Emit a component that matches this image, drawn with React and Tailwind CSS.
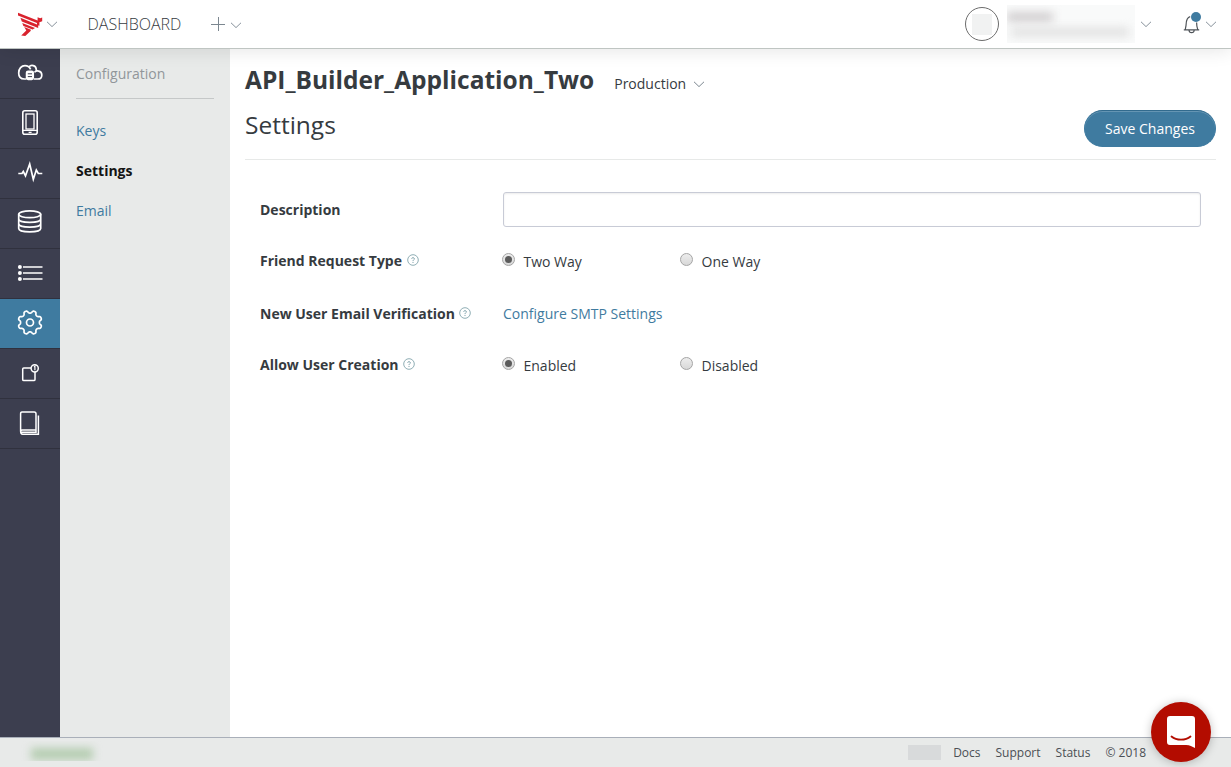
import React from "react";

function Chevron({ className = "" }) {
  return (
    <svg className={`block shrink-0 ${className}`} width="12" height="7" viewBox="0 0 12 7" fill="none" stroke="currentColor" strokeWidth="1">
      <path d="M1 .8 6 5.6 11 .8" />
    </svg>
  );
}

function Help() {
  return (
    <svg className="ml-[4.5px] block shrink-0 text-[#83a5ad]" width="12" height="12" viewBox="0 0 12 12" fill="none" stroke="currentColor">
      <circle cx="6" cy="6" r="5.3" strokeWidth=".9" />
      <path d="M4.6 4.7C4.7 3.3 7.4 3.3 7.4 4.8 7.4 5.9 6 5.8 6 7.1M6 8v1" strokeWidth="1" />
    </svg>
  );
}

function Logo() {
  return (
    <svg className="block shrink-0 text-[#d9232e]" width="26" height="25" viewBox="0 0 26 25" fill="currentColor">
      <path d="M1 .8 20.6 8.6 20.6 5.2 23.2 6.3 25.2 5.4V9.2L22.4 10.2V13.8L20 12.9V11L1 3.5Z" />
      <path d="M3.4 5.8 21.2 13V15.9L4.8 9.4Z" />
      <path d="M5.2 11 18 16.1 15.6 17.6 6.4 13.9Z" />
      <path d="M7.2 15 13.9 17.8 13.6 19 8.3 24 4.2 23.6 9.3 18.4Z" />
    </svg>
  );
}

const gearPoints = Array.from({ length: 160 }, (_, i) => {
  const a = (i / 160) * Math.PI * 2;
  const r = 10.7 - 1.35 * Math.tanh(1.8 * Math.cos(8 * a));
  return `${(14 + r * Math.sin(a)).toFixed(2)},${(14 - r * Math.cos(a)).toFixed(2)}`;
}).join(" ");

const icons = {
  cloud: (
    <>
      <path d="M10.3 20H8.2C4 20 2.7 16.7 2.7 14 2.7 9.5 5.5 6.7 9 6.7c2.3 0 4.5 1.4 5.6 3.6M13 7.9c1.9-2.5 7-1.9 7.3 2.5v1.8M18.5 13.4c1.4-2.4 7.3-2 7.3 2.5 0 2.8-2 4.1-4 4.1h-4" />
      <rect x="10.6" y="12.3" width="6.6" height="8" rx="1.5" fill="currentColor" />
      <path d="M11.8 14.8h4.2M11.8 17.6h4.2" stroke="#3c3e4f" strokeWidth="1" />
    </>
  ),
  phone: (
    <g transform="translate(0 -1)">
      <rect x="6.8" y="2.8" width="14.4" height="23.4" rx="2" strokeWidth="1.6" />
      <rect x="10" y="6" width="8" height="15" strokeWidth="1.3" />
      <path d="M7 22.4h14M12.6 24.4h3" strokeWidth="1.4" />
    </g>
  ),
  pulse: <path d="M2.3 14.5H6l1.3-2 2.2 4.3L13.7 5l3.6 15.3 3-9.3 2 3.5h4" strokeWidth="1.7" />,
  database: (
    <g transform="translate(0 -1)">
      <ellipse cx="13.7" cy="6.3" rx="11" ry="3.4" />
      <path d="M2.7 6.3v14.2c0 4.5 22 4.5 22 0V6.3M2.7 11c0 4.5 22 4.5 22 0M2.7 15.7c0 4.5 22 4.5 22 0" />
    </g>
  ),
  list: (
    <>
      <path d="M7 8h19.5M7 14h19.5M7 20h19.5" strokeWidth="1.7" />
      <g fill="currentColor" stroke="none">
        <circle cx="3.9" cy="8" r="2" />
        <circle cx="3.9" cy="14" r="2" />
        <circle cx="3.9" cy="20" r="2" />
      </g>
    </>
  ),
  gear: (
    <>
      <circle cx="14" cy="13.5" r="3.5" />
      <polygon points={gearPoints} strokeLinejoin="round" transform="translate(0 -.5)" />
    </>
  ),
  notice: (
    <>
      <path d="M15 9H7.8C7 9 6.7 9.3 6.7 10v10.5c0 .8.4 1.1 1.1 1.1h10c.9 0 1.2-.4 1.2-1.1v-7.8" strokeWidth="1.5" />
      <circle cx="18.7" cy="9.3" r="3.6" strokeWidth="1.5" />
      <path d="m18 8 .9-.7v4" strokeWidth="1.2" />
    </>
  ),
  book: (
    <path d="M6 3h12.2c1.2 0 1.8.7 1.8 1.8V21H6.3C4.9 21 4.6 22 4.6 22.6V5C4.6 3.7 5 3 6 3ZM4.6 22c0 2 .7 3.2 2 3.2h15.8V6.5M5.5 23.2H20V21" strokeWidth="1.5" />
  ),
};

const nav = ["cloud", "phone", "pulse", "database", "list", "gear", "notice", "book"];

function NavItem({ name }) {
  const active = name === "gear";
  return (
    <a className={`flex h-[50px] shrink-0 items-start justify-center border-b border-[#30313e] pt-[10px] text-white ${active ? "bg-[#3f7ba0]" : ""}`}>
      <svg width="28" height="28" viewBox="0 0 28 28" fill="none" stroke="currentColor" strokeWidth="1.7">
        {icons[name]}
      </svg>
    </a>
  );
}

function Radio({ label, checked }) {
  return (
    <label className="flex w-[178px] items-start">
      <span className="mt-[3px] mr-[0.5px] -ml-px flex h-[13px] w-[13px] items-center justify-center rounded-full border border-[#a5a5a5] bg-linear-to-b from-[#ededed] to-[#d8d8d8]">
        {checked && <span className="h-[7px] w-[7px] rounded-full bg-[#5b5b5b]" />}
      </span>
      <span className="mt-[2px] ml-2 leading-5">{label}</span>
    </label>
  );
}

function Row({ label, help, className, children }) {
  return (
    <div className={`flex items-start pl-[15px] ${className}`}>
      <div className="flex h-5 w-[243px] shrink-0 items-center font-bold">
        <span>{label}</span>
        {help && <Help />}
      </div>
      {children}
    </div>
  );
}

export default function App() {
  return (
    <div className="flex h-[767px] w-[1231px] flex-col overflow-hidden bg-white font-['Open_Sans',sans-serif] text-[14px] text-[#363b3f]">
      <header className="relative z-10 flex h-[49px] shrink-0 items-center border-b border-[#bfc5c2] bg-white shadow-[0_0_20px_rgba(0,0,0,0.12)]">
        <div className="flex items-center pl-[17px]">
          <Logo />
          <Chevron className="ml-[3px] text-[#87919b]" />
          <span className="ml-[29.5px] text-[16px] font-light text-[#363b3f]">DASHBOARD</span>
          <svg className="ml-[29.5px] block text-[#7c8790]" width="14" height="14" viewBox="0 0 14 14" stroke="currentColor">
            <path d="M0 7.5h14M7.5 0v14" />
          </svg>
          <Chevron className="mt-[2px] ml-[5px] text-[#87919b]" />
        </div>
        <div className="ml-auto flex items-center pr-[14px]">
          <div className="flex h-[34px] w-[34px] items-center justify-center rounded-full border border-[#6d6d6d]">
            <span className="h-[21px] w-[20px] bg-[#f1f2f2]" />
          </div>
          <div className="ml-[8px] flex h-[38px] w-[128px] flex-col justify-center overflow-hidden bg-[#f9fafa]">
            <span className="h-[8px] w-[46px] bg-[#c9c5c7] blur-[5px]" />
            <span className="mt-[7px] ml-1 h-[8px] w-[118px] bg-[#dedede] blur-[5px]" />
          </div>
          <Chevron className="ml-[5px] text-[#87919b]" />
          <div className="relative -mt-[2px] ml-[31px] h-[22px] w-[18px]">
            <svg className="block" width="18" height="22" viewBox="0 0 18 22" fill="none" stroke="#4e5358" strokeWidth="1.2">
              <path d="M.8 17.9h15.4M2.4 17.9C2.2 16 3 15.3 3.1 12.5 3.2 8.6 4 5.5 7.2 4.6M13.6 10.5c.1 5 .7 5.3 1.3 7.4M6 18.2c.2 3.3 5 3.3 5.2 0" />
            </svg>
            <span className="absolute top-0 left-[8px] h-[10px] w-[10px] rounded-full bg-[#3f7ba0]" />
          </div>
          <Chevron className="ml-[4px] text-[#87919b]" />
        </div>
      </header>

      <div className="flex min-h-0 grow">
        <nav className="flex w-[60px] shrink-0 flex-col bg-[#3c3e4f]">
          {nav.map((name) => (
            <NavItem key={name} name={name} />
          ))}
        </nav>
        <aside className="w-[170px] shrink-0 bg-[#e8eae9] px-4 pt-[15px]">
          <div className="border-b border-[#c5c8c8] pb-[14px] leading-5 text-[#91969a]">Configuration</div>
          <div className="mt-[22px] flex flex-col gap-5 leading-5 text-[#3f7ba0]">
            <a>Keys</a>
            <a className="font-bold text-[#141414]">Settings</a>
            <a>Email</a>
          </div>
        </aside>
        <main className="grow px-[15px]">
          <div className="flex items-start pt-[13px]">
            <h1 className="text-[24.5px] leading-9 font-bold">API_Builder_Application_Two</h1>
            <div className="mt-3 ml-5 flex items-center leading-5">
              <span>Production</span>
              <Chevron className="ml-[7px] text-[#7c8790]" />
            </div>
          </div>
          <div className="flex h-[62px] items-start justify-between border-b border-[#e7e9e8]">
            <h2 className="mt-[9px] text-[24.5px] leading-9">Settings</h2>
            <button className="mt-[12px] h-[37px] w-[132px] rounded-full border border-t-[#326b8e] border-[#3f7ba0] bg-[#3f7ba0] text-white shadow-[inset_0_1px_0_rgba(255,255,255,0.2)]">
              Save Changes
            </button>
          </div>
          <Row label="Description" className="h-[59px] pt-[39px]">
            <input className="-mt-[7px] mr-[15px] h-[35px] grow rounded-[3px] border border-[#c8cbd6] bg-white shadow-[inset_0_1px_2px_rgba(0,0,0,0.08)]" />
          </Row>
          <Row label="Friend Request Type" help className="mt-[31px]">
            <Radio label="Two Way" checked />
            <Radio label="One Way" />
          </Row>
          <Row label="New User Email Verification" help className="mt-[31px]">
            <a className="mt-px leading-5 text-[#3f7ba0]">Configure SMTP Settings</a>
          </Row>
          <Row label="Allow User Creation" help className="mt-[30px]">
            <Radio label="Enabled" checked />
            <Radio label="Disabled" />
          </Row>
        </main>
      </div>

      <footer className="relative flex h-[30px] shrink-0 items-center border-t border-[#a9afb9] bg-[#e8eae9] text-[12px] text-[#4b4f54]">
        <div className="ml-[11px] -mt-[4px] flex h-[20px] w-[92px] items-center overflow-hidden">
          <span className="mt-[6px] ml-[20px] h-[12px] w-[62px] bg-[#b5cdb1] blur-[4px]" />
        </div>
        <div className="ml-auto flex items-center gap-[15px] pr-[85px]">
          <span className="mr-[-3px] h-[15px] w-[33px] bg-[#d8dadb]" />
          <a>Docs</a>
          <a>Support</a>
          <a>Status</a>
          <span>© 2018</span>
        </div>
        <button className="absolute right-[20px] bottom-[5px] flex h-[60px] w-[60px] items-center justify-center rounded-full bg-[#b30c00] shadow-[0_1px_10px_rgba(0,0,0,0.25)]">
          <svg width="28" height="32" viewBox="0 0 28 32">
            <path d="M3 0h22a3 3 0 0 1 3 3v29c-3-1.2-5-3-9-3H3a3 3 0 0 1-3-3V3a3 3 0 0 1 3-3Z" fill="#fff" />
            <path d="M4.5 20.5c5 4.2 14 4.2 19 0" fill="none" stroke="#b30c00" strokeWidth="1.8" strokeLinecap="round" />
          </svg>
        </button>
      </footer>
    </div>
  );
}
